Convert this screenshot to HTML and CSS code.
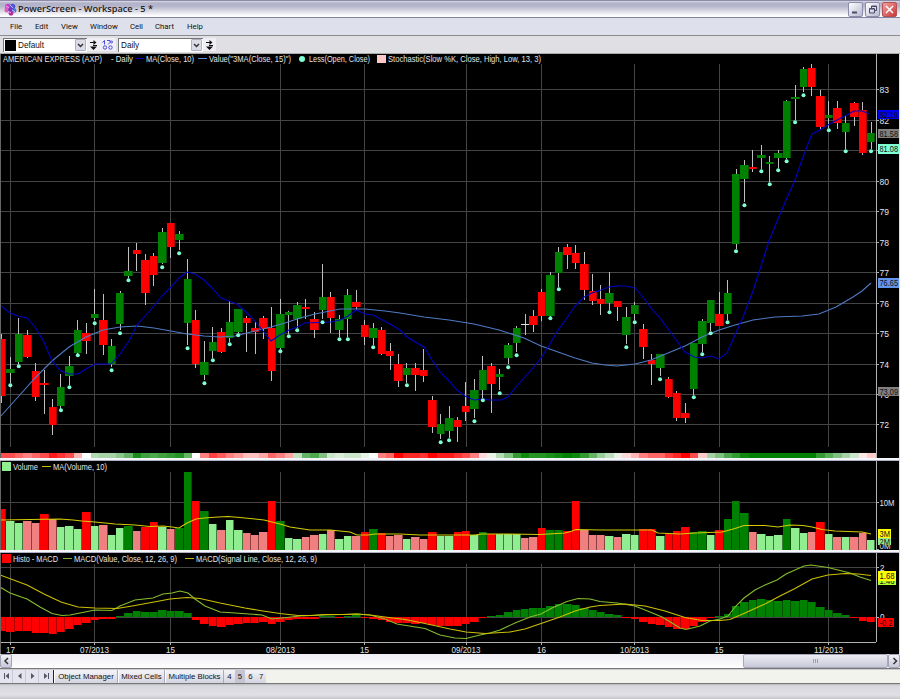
FILE: index.html
```html
<!DOCTYPE html>
<html lang="en">
<head>
    <meta charset="UTF-8">
    <title>PowerScreen - Workspace - 5 *</title>
    <link rel="stylesheet" href="styles.css">
</head>
<body>
<div class="window">
    <div class="titlebar">
        <svg class="logo" width="13" height="13" viewBox="0 0 13 13">
            <circle cx="4" cy="3.5" r="2.8" fill="#c63fd0"/>
            <circle cx="8.5" cy="3.5" r="2.8" fill="#4a55d8"/>
            <circle cx="3" cy="7" r="2.5" fill="#e05cb8"/>
            <circle cx="7" cy="7" r="2.8" fill="#7a35c8"/>
            <circle cx="10.2" cy="7.5" r="2.3" fill="#3f78d8"/>
            <circle cx="7" cy="10.3" r="2.4" fill="#b02ca0"/>
            <path d="M2 3l3 2M6 2l3 3M4 8l3 2M8 7l3 2" stroke="#f4c8f4" stroke-width=".8"/>
        </svg>
        <span class="title">PowerScreen - Workspace - 5 *</span>
        <div class="win-btns">
            <span class="win-btn"><svg width="13" height="13"><path d="M3 9.500h5" stroke="#4a4a68" stroke-width="2"/></svg></span>
            <span class="win-btn"><svg width="13" height="13" fill="none" stroke="#4a4a68"><path d="M5.500 5.500v-2.500h5v4.500h-2"/><path d="M5.500 3.500h5"/><path d="M3.500 5.500h5v4.500h-5zM3.500 6h5"/></svg></span>
            <span class="win-btn close"><svg width="13" height="13"><path d="M3 3l7 7M10 3l-7 7" stroke="#fff" stroke-width="1.500"/></svg></span>
        </div>
    </div>
    <div class="menubar">
        <span class="m1">File</span><span class="m2">Edit</span><span class="m3">View</span><span class="m4">Window</span><span class="m5">Cell</span><span class="m6">Chart</span><span class="m7">Help</span>
    </div>
    <div class="toolbar">
        <div class="combo combo-template"><i class="swatch"></i><span>Default</span><b class="drop"><svg width="9" height="9"><path d="M2 3l2.500 2.500L7 3" fill="none" stroke="#333" stroke-width="1.500"/></svg></b></div>
        <b class="tool"><svg width="11" height="12"><path d="M2 3.500h4M5 6.500h4" stroke="#111"/><path d="M5.500 1l3 2.500-3 2.500zM2 7.500h7L5.500 11z" fill="#111"/></svg></b>
        <b class="tool blue"><svg width="14" height="12" fill="none" stroke="#4a4ae0"><path d="M1.500 3.500l2-2v4M6 1.500h3v2l-2 2"/><circle cx="10.500" cy="3" r="1"/><circle cx="4" cy="8.500" r="1.700"/><circle cx="9.500" cy="8.500" r="1.700"/></svg></b>
        <div class="combo combo-period"><span>Daily</span><b class="drop"><svg width="9" height="9"><path d="M2 3l2.500 2.500L7 3" fill="none" stroke="#333" stroke-width="1.500"/></svg></b></div>
        <b class="tool"><svg width="11" height="12"><path d="M2 3.500h4M5 6.500h4" stroke="#111"/><path d="M5.500 1l3 2.500-3 2.500zM2 7.500h7L5.500 11z" fill="#111"/></svg></b>
    </div>
    <div class="charts">
        <svg id="price" class="panel" width="899" height="404" viewBox="0 54 899 404"></svg>
        <div class="divider"></div>
        <svg id="volume" class="panel" width="899" height="89" viewBox="0 461 899 89"></svg>
        <div class="divider"></div>
        <svg id="macd" class="panel" width="899" height="101" viewBox="0 553 899 101"></svg>
    </div>
    <div class="scrollbar">
        <span class="sb-btn"><svg width="12" height="12"><path d="M7 3L4 6l3 3" fill="none" stroke="#333" stroke-width="1.500"/></svg></span>
        <div class="track"><div class="thumb"><i></i></div></div>
        <span class="sb-btn"><svg width="12" height="12"><path d="M4.500 3l3 3-3 3" fill="none" stroke="#333" stroke-width="1.500"/></svg></span>
    </div>
    <div class="tabs">
        <span class="nav"><svg width="13" height="12"><path d="M4.500 3v6" stroke="#556"/><path d="M9 3v6L5.500 6z" fill="#556"/></svg></span>
        <span class="nav"><svg width="13" height="12"><path d="M8.500 3v6L5 6z" fill="#556"/></svg></span>
        <span class="nav"><svg width="13" height="12"><path d="M5 3v6l3.500-3z" fill="#556"/></svg></span>
        <span class="nav nav-last"><svg width="13" height="12"><path d="M9.500 3v6" stroke="#556"/><path d="M5 3v6l3.500-3z" fill="#556"/></svg></span>
        <span class="tab t1">Object Manager</span>
        <span class="tab t2">Mixed Cells</span>
        <span class="tab t3">Multiple Blocks</span>
        <span class="tab num">4</span>
        <span class="tab num active">5</span>
        <span class="tab num">6</span>
        <span class="tab num">7</span>
    </div>
    <div class="status"></div>
</div>
<script src="chart.js"></script>
</body>
</html>
```
FILE: styles.css
```css
body {
    margin: 0;
    background: #dcdce4;
    font-family: "Liberation Sans", Arial, sans-serif;
    font-size: 8.2px;
    color: #111;
}

.window {
    width: 900px;
    height: 699px;
    display: flex;
    flex-direction: column;
    overflow: hidden;
}

.titlebar {
    height: 16px;
    display: flex;
    align-items: center;
    padding: 0 3px 0 4px;
    border-top: 1px solid #8c8ca8;
    border-bottom: 1px solid #8484a0;
    background: linear-gradient(#dcdce8 0, #b2b2c8 2px, #b4b4ca 5px, #f0f0f6 13px, #fff 15px);
}

.title {
    margin-left: 1px;
    font-family: "Open Sans", "Noto Sans", sans-serif;
    font-weight: 600;
    font-size: 9.2px;
    line-height: 16px;
    color: #222;
    white-space: nowrap;
}

.win-btns {
    display: flex;
    gap: 2px;
    margin-left: auto;
}

.win-btn {
    width: 13px;
    height: 13px;
    border: 1px solid #8c8cac;
    border-radius: 2px;
    background: linear-gradient(135deg, #fff, #b8b8d0);
}

.win-btn svg {
    display: block;
}

.win-btn.close {
    border-color: #b05050;
    background: linear-gradient(135deg, #f0a0a0, #cc3838);
}

.menubar {
    height: 17px;
    display: flex;
    align-items: center;
    padding-left: 10px;
    background: #dee1ec;
    border-bottom: 1px solid #8c8c90;
    font-family: Roboto, sans-serif;
    font-size: 7.8px;
}

.m1 { width: 25px; }
.m2 { width: 26px; }
.m3 { width: 29px; }
.m4 { width: 40px; }
.m5 { width: 25px; }
.m6 { width: 32px; }

.toolbar {
    height: 17px;
    display: flex;
    align-items: center;
    padding-left: 3px;
    background: #e0dfe3;
    border-bottom: 1px solid #aaa;
}

.combo {
    height: 14px;
    display: flex;
    align-items: center;
    background: #fff;
    border-top: 1px solid #777;
    border-left: 1px solid #777;
    box-sizing: border-box;
}

.combo-template {
    width: 84px;
    padding-right: 1px;
}

.combo-period {
    width: 85px;
    padding-left: 2px;
    padding-right: 1px;
}

.swatch {
    width: 11px;
    height: 11px;
    margin: 0 2px 0 1px;
    background: #000;
}

.drop {
    display: flex;
    width: 11px;
    height: 12px;
    margin-left: auto;
    align-items: center;
    justify-content: center;
    border: 1px solid #b0b0c4;
    border-radius: 1px;
    box-sizing: border-box;
    background: #dcdce8;
}

.tool {
    display: flex;
    align-items: center;
    width: 13px;
    height: 13px;
    background: #eeeef4;
    justify-content: center;
}

.tool.blue {
    width: 16px;
    margin-right: 2px;
}

.charts {
    height: 600px;
    width: 899px;
    display: flex;
    flex-direction: column;
    background: #000;
}

.panel {
    display: block;
    background: #000;
}

.panel text {
    font-family: "Liberation Sans", Arial, sans-serif;
    font-size: 8.8px;
    fill: #e4e4e4;
}

.panel .tag-text {
    fill: #111;
}

.panel .mid {
    text-anchor: middle;
}

.grid {
    stroke: #444;
    stroke-width: 1;
}

.axis {
    stroke: #b0b0b0;
    stroke-width: 1;
}

.line {
    fill: none;
    stroke-width: 1.1;
}

.divider {
    height: 3px;
    box-sizing: border-box;
    background: #f4f4fb;
    border-bottom: 1px solid #aeb0c4;
}

.scrollbar {
    height: 14px;
    display: flex;
    border-bottom: 1px solid #77777c;
    background: #f6f6fa;
}

.sb-btn {
    display: flex;
    align-items: center;
    justify-content: center;
    width: 12px;
    box-sizing: border-box;
    border: 1px solid #a4a4b8;
    border-radius: 2px;
    background: linear-gradient(#f2f2f8, #c8c8da);
}

.track {
    flex: 1;
    display: flex;
    justify-content: flex-end;
    background: linear-gradient(#ededf3, #fff);
}

.thumb {
    width: 145px;
    display: flex;
    align-items: center;
    justify-content: center;
    box-sizing: border-box;
    border: 1px solid #a8a8bc;
    border-radius: 2px;
    background: linear-gradient(#ececf3, #c8c8da);
}

.thumb i {
    width: 5px;
    height: 4px;
    background: repeating-linear-gradient(90deg, #9c9cb0 0, #9c9cb0 1px, #dcdce8 1px, #dcdce8 2px);
}

.tabs {
    height: 13px;
    display: flex;
    align-items: stretch;
    background: #f3f3ee;
    border-bottom: 1px solid #777;
    border-top: 1px solid #ccc;
    line-height: 13px;
    font-size: 7.8px;
}

.nav {
    width: 13px;
    background: #e4e4ee;
    border-right: 1px solid #c8c8d8;
    box-sizing: border-box;
}

.nav-last {
    width: 15px;
    border-right: 1px solid #222;
}

.tab {
    box-sizing: border-box;
    text-align: center;
    white-space: nowrap;
    background: linear-gradient(#f4f4f8, #d4d4e2);
    border-right: 1px solid #aaaabc;
    border-left: 1px solid #fff;
}

.t1 { width: 64px; }
.t2 { width: 47px; }
.t3 { width: 59px; }

.num {
    width: 10.6px;
    border-color: transparent;
}

.num.active {
    background: #c4c4d2;
}

.status {
    flex: 1;
    background: linear-gradient(#b8b8c0 0, #d8d8de 2px, #e0e0e6 11px, #c4c4cc 15px);
}
```
FILE: chart.js
```js
var STEP = 8.438;

function x(i) {
    return 1.9 + STEP * i;
}

// high, body top, body bottom, low, [signal dot]; a dot means an up bar
var bars = [
    [334,339,396,403],[357,369,373,383,385],[318,334,362,364,366],[330,335,357,358],[363,371,397,401],
    [370,383,385,414],[399,407,425,435],[374,387,406,409,410],[356,366,376,385,387],[320,330,353,354,355],
    [323,333,341,354],[289,314,318,320,323],[294,320,345,355],[339,346,364,367,370],[291,293,324,330,333],
    [247,271,276,278,280],[243,250,254,271],[254,260,293,305],[253,256,275,286],[228,232,263,264,267],
    [223,223,247,258],[231,234,240,250,253],[259,279,323,345,348],[310,320,364,368],[341,362,375,380,383],
    [327,342,351,358,360],[328,332,352,353],[301,322,338,342,344],[309,309,332,333,335],[316,318,323,352],
    [322,328,332,354],[316,318,329,339],[307,328,371,381],[299,314,348,349,351],[311,312,315,334,336],
    [302,305,319,328,330],[299,307,309,319],[312,319,330,338],[264,297,310,319,322],[292,297,318,333],
    [315,319,330,337,339],[289,295,319,337,339],[290,302,307,310],[320,325,337,345],[323,328,338,345,347],
    [327,330,354,355],[343,351,356,370],[354,364,381,387],[363,368,375,383,385],[363,368,375,391],
    [349,370,376,382],[396,400,427,433],[414,424,434,439,442],[406,418,431,438,440],[417,420,427,442],
    [382,406,412,421],[379,390,409,418,421],[356,370,390,398,400],[363,366,384,413],[369,374,377,390,393],
    [343,345,358,364,367],[326,328,343,352,355],[314,324,325,335],[310,316,325,332],[289,292,316,321],
    [272,275,316,317,318],[247,252,273,287,289],[244,247,255,269],[245,253,263,269],[252,264,290,300],
    [274,291,301,305],[285,299,304,315],[272,293,303,310,312],[301,301,307,321],[307,317,335,344,347],
    [302,305,314,320,322],[324,329,347,359],[354,360,364,385],[354,354,368,376,379],[377,379,397,398],
    [391,393,418,421],[403,413,418,423],[343,343,389,395,397],[319,321,344,352,354],[300,300,323,331,333],
    [292,314,326,326],[280,293,314,320,322],[169,174,244,249,251],[160,165,179,202,205],[150,167,169,172],
    [145,155,158,169,171],[156,162,164,182,184],[150,153,158,168,170],[100,101,158,159,161],[85,97,99,120,122],
    [67,69,87,92,95],[64,68,87,96],[90,96,127,129],[101,115,118,128,130],[101,108,123,129],
    [116,123,132,149,151],[102,103,117,126],[102,110,153,155],[122,133,142,149,151]
];
var DOJI = 62;

// negative is red, positive is green, strength up to 10
var stoch = [-7,-7,-6,-5,-6,-7,-9,-8,-7,-3,0,3,3.5,3.5,4.5,6,9,7.5,7,7.5,8,8.5,6,0,-5,-7.5,-6.5,-5,-4,-2.5,
    -2.5,-3.5,-6,-5,-3.5,2.5,6,7,5,2,1.5,2,2,1,0,-5,-6,-10,-8.5,-8.5,-8,-10,-9,-9,-8,-7,-5,-1.5,1,3,
    5,8,9.5,8.5,8.5,9,9.5,10,9.5,8,6,4,2.5,1,-1.5,-3,-5,-6,-6,-7.5,-8.5,-10,-7,-2,3.5,5,7,8,9.5,10,
    10,10,10,10,10,10,10,8,6.5,5,3.5,2,-1,-2];

var volColors = {R: '#ff0000', G: '#008000', g: '#90ee90', p: '#f08080'};
var vol = ('R509 g521 g523 p521 p523 R514 p519 g527 g526 g529 R512 g526 p525 g535 g528 G526 p531 R527 R522 g527 ' +
    'p529 G528 G472 R501 G511 g524 p530 g520 g530 p533 p535 p532 R501 G521 g538 g539 p537 p535 g534 p530 ' +
    'g539 g536 p536 R532 G529 R533 p536 p535 g539 p537 p539 R532 g536 g536 R532 R531 g535 G532 R534 g534 ' +
    'g534 g534 p538 p537 R528 G530 G530 R531 R501 p530 p535 p535 g536 p537 g534 g535 R529 R529 g536 R534 ' +
    'R531 R527 G532 G531 g535 R530 G519 G501 G513 p532 g534 g536 g535 G519 g528 g533 p532 R522 g534 p537 ' +
    'g537 p537 p533 g540').split(' ');

var histo = [631,632,631,631,633,633,634,632,629,625,623,620,619,619,616,613,611,612,612,610,611,611,613,620,624,626,
    627,625,624,623,623,622,624,622,620,619,619,619,616,616,618,616,615,618,619,620,622,623,623,624,623,625,
    626,626,626,624,622,618,616,615,612,610,609,608,608,606,604,604,605,608,610,612,614,615,618,619,622,624,
    625,627,629,629,626,622,618,616,614,606,602,600,599,600,601,600,601,600,602,607,610,613,615,618,621,622];

var ma10 = '0,305 10,313 18,316 27,318 35,327 44,342 52,361 61,371 69,374 78,374 86,369 95,364 111,364 120,354 129,341 137,325 146,315 154,306 162,296 171,287 179,278 187,272 195,274 204,280 212,288 221,298 229,301 237,304 246,312 255,321 263,331 271,341 280,335 289,330 297,327 305,323 331,322 340,320 348,316 356,310 365,314 373,315 390,324 400,330 407,337 424,347 432,360 441,373 449,381 457,390 465,396 474,400 483,399 490,400 501,400 508,397 516,387 524,378 533,368 541,358 550,344 558,330 567,318 575,306 584,297 592,293 601,290 609,287 617,286 626,286 635,288 643,297 651,308 660,318 668,329 677,341 685,352 694,357 702,358 711,356 719,359 727,353 735,335 743,317 753,291 761,266 769,241 778,219 786,200 795,180 803,157 812,134 820,130 828,125 837,120 845,116 854,111 862,111 870,114';
var ma3 = '0,417 18,397 36,377 52,361 69,347 86,337 103,330 120,327 137,326 154,328 171,331 187,334 204,336 220,337 235,336 255,331 271,327 285,323 300,318 315,314 330,311 340,309 365,309 385,311 400,313 424,317 449,320 474,324 499,330 524,338 541,346 558,352 575,358 592,363 605,365 617,366 635,364 651,360 668,353 685,346 702,337 719,330 735,325 753,320 775,317 802,316 819,314 836,307 853,297 862,291 871,283';
var volMa = '0,520 60,519 73,520 82,521 95,522 115,524 135,525 150,526.5 163,526 172,527 179,528 187,523 196,519 204,518 218,517 228,516.5 240,517.5 255,519 264,520 280,524 290,527 300,528.5 310,530 330,530 350,532 357,535 368,535 375,534 400,534 420,535 475,535 482,534 505,534 540,534.5 565,533 572,531 576,529.5 600,530 652,530 658,533 680,534 695,533 722,532 735,528.5 744,525.5 765,525.5 778,527 790,525 803,525.5 812,527 822,529.5 835,531 862,532 871,534';
var signal = '0,575 27,585 44,594 61,602 78,607 95,608 117,608.5 135,605.5 154,602 170,599 187,597.5 200,598.5 220,603 245,608 263,611 280,613.5 298,615.5 310,615.5 325,614.5 345,614.5 357,614 370,615 385,617 405,619.5 425,623.5 450,629 466,632 485,633.5 510,632 525,629 541,623.5 560,617 575,611 590,607 600,605.5 625,604 645,606 665,611 685,617.5 702,620.5 720,620.5 730,619.5 745,613 765,604 780,596 795,588.5 812,579 828,575 845,573.5 858,574 871,575.5';
var value = '0,587 10,593 27,599 40,607 52,613.5 62,615.5 70,615 85,612 95,610 112,610.5 120,606 135,600 153,598 163,594 172,593 180,591 188,593 195,599 205,606 220,612 235,613 262,615 272,619 282,618 300,616 325,615 357,614 370,615 385,619 397,624 425,628.5 440,635 455,638 466,638.5 480,635 490,633 500,630 515,623 530,617 541,614 552,608 567,601.5 578,598.5 590,599 600,601.5 617,603 635,606 650,612 662,617 672,623 680,628 686,629.5 700,626 710,621 720,619 728,616 735,607 744,598 755,590 765,585 777,580 786,574 795,570 804,566 811,565 828,567.5 850,573 860,577 871,580.5';

var dates = [[10.5,'17',9],[94.5,'07/2013',29],[170.5,'15',9],[280.5,'08/2013',29],[364.5,'15',9],[466,'09/2013',29],
    [541.5,'16',9],[634.5,'10/2013',29],[719,'15',9],[828.5,'11/2013',29]];

function rect(x, y, w, h, fill) {
    return '<rect x="' + x + '" y="' + y + '" width="' + w + '" height="' + h + '" fill="' + fill + '"/>';
}

function seg(x1, y1, x2, y2, cls) {
    return '<line x1="' + x1 + '" y1="' + y1 + '" x2="' + x2 + '" y2="' + y2 + '" class="' + cls + '" shape-rendering="crispEdges"/>';
}

function dash(x1, y, w, color) {
    return rect(x1, y, w, 1, color);
}

function poly(points, color) {
    return '<polyline class="line" points="' + points + '" stroke="' + color + '"/>';
}

// w fixes the drawn width of the label
function text(x, y, s, w, cls) {
    return '<text x="' + x + '" y="' + y + '" class="' + (cls || '') + '"' +
        (w ? ' textLength="' + w + '" lengthAdjust="spacingAndGlyphs"' : '') + '>' + s + '</text>';
}

function tag(y, w, h, color, s, tw) {
    return rect(878, y, w, h, color) + text(879.5, y + 8, s, tw, 'tag-text');
}

function vgrid(top, bottom) {
    return dates.map(function (d) {
        return seg(Math.floor(d[0]) + .5, top, Math.floor(d[0]) + .5, bottom, 'grid');
    }).join('');
}

// bar column with a darker outline
function column(i, top, bottom, color) {
    var left = Math.round(x(i) - 4);
    var w = Math.round(x(i + 1) - 4) - left;
    if (left < 1) {
        w += left - 1;
        left = 1;
    }
    var edge = {'#ff0000': '#b00000', '#008000': '#005000', '#90ee90': '#3f7a3f', '#f08080': '#8a4040'}[color];
    return rect(left, top, w, bottom - top, edge) +
        rect(left, top, w - 1, bottom - top, color);
}

function drawPrice() {
    var s = vgrid(64, 447), i, b, y;
    for (i = 0; i < 12; i++) {
        y = Math.floor(89.7 + 30.48 * i) + .5;
        s += seg(1, y, 876, y, 'grid');
    }
    for (i = 0; i < bars.length; i++) {
        b = bars[i];
        s += rect(Math.round(x(i) - .5), b[0], 1, b[3] - b[0], '#c0c0c0');
        if (i === DOJI) {
            s += rect(Math.round(x(i)) - 4, b[1], 9, 1, '#e0e0e0');
        } else {
            s += column(i, b[1], b[2], b.length > 4 ? '#008000' : '#ff0000');
        }
    }
    s += poly(ma3, '#4f7ac4') + poly(ma10, '#0000c4');
    for (i = 0; i < bars.length; i++) {
        if (bars[i].length > 4) {
            s += '<circle cx="' + x(i) + '" cy="' + (bars[i][4] + .2) + '" r="2" fill="#7fffd4"/>';
        }
        var v = stoch[i], c = Math.round(255 * (1 - Math.abs(v) / 10));
        s += rect(Math.max(1, Math.round(x(i) - 4)), 453, 9, 5,
            v < 0 ? 'rgb(255,' + c + ',' + c + ')' : 'rgb(' + c + ',' + Math.round(128 + c / 2) + ',' + c + ')');
    }
    s += rect(876, 54, 23, 404, '#000') + seg(876.5, 54, 876.5, 458, 'axis');
    // 81 sits behind its price tag
    for (i = 0; i < 12; i++) {
        y = Math.floor(89.7 + 30.48 * i) + .5;
        s += seg(876, y, 879, y, 'axis');
        if (i !== 2) {
            s += text(879.5, y + 3.5, 83 - i, 9.5);
        }
    }
    s += tag(110, 21, 9, '#0000f0', '82.19', 18.5) + tag(129, 21, 9, '#808080', '81.58', 18.5) +
        tag(144, 21, 10, '#7fffd4', '81.08', 18.5) + tag(278, 21, 10, '#6495ed', '76.65', 18.5) +
        tag(387, 21, 9, '#808080', '73.09', 18.5);
    s += text(3, 62, 'AMERICAN EXPRESS (AXP)', 99) + text(111, 62, '- Daily', 22) +
        dash(135, 58, 9, '#0000c8') + text(146, 62, 'MA(Close, 10)', 48) +
        dash(198, 58, 9, '#5a8ad8') + text(209, 62, 'Value("3MA(Close, 15)")', 82) +
        '<circle cx="302" cy="59" r="3" fill="#7fffd4"/>' + text(309, 62, 'Less(Open, Close)', 61) +
        rect(377, 55, 9, 8, '#ffc8c8') + text(388, 62, 'Stochastic(Slow %K, Close, High, Low, 13, 3)', 153);
    s += rect(0, 54, 1, 404, '#666');
    document.getElementById('price').innerHTML = s;
}

function drawVolume() {
    var s = vgrid(472, 550) + seg(1, 502.5, 876, 502.5, 'grid');
    vol.forEach(function (v, i) {
        s += column(i, +v.slice(1), 550, volColors[v[0]]);
    });
    s += poly(volMa, '#d4cc00');
    s += rect(876, 461, 23, 89, '#000') + seg(876.5, 461, 876.5, 550, 'axis') + seg(876, 502.5, 879, 502.5, 'axis');
    s += text(879.5, 506, '10M', 15) + text(879.5, 549, '0M', 11) + seg(876, 549.5, 879, 549.5, 'axis') +
        tag(537, 13, 8, '#90ee90', '2M', 10.5) + tag(529, 13, 9, '#ffff00', '3M', 10.5);
    s += rect(2, 462, 9, 9, '#90ee90') + text(13, 470, 'Volume', 25) +
        dash(42, 466, 9, '#c8c000') + text(53, 470, 'MA(Volume, 10)', 54);
    s += rect(0, 461, 1, 89, '#666');
    document.getElementById('volume').innerHTML = s;
}

function drawMacd() {
    var s = vgrid(564, 642) + seg(1, 567.5, 876, 567.5, 'grid') + seg(1, 617.5, 876, 617.5, 'grid');
    histo.forEach(function (h, i) {
        s += h > 617 ? column(i, 617, h, '#ff0000') : column(i, h, 617, '#008000');
    });
    s += poly(value, '#86bc2c') + poly(signal, '#ccc000');
    s += rect(876, 553, 23, 89, '#000') + seg(876.5, 553, 876.5, 642, 'axis') + seg(0, 642.5, 876, 642.5, 'axis');
    s += seg(876, 567.5, 879, 567.5, 'axis') + seg(876, 617.5, 879, 617.5, 'axis') +
        text(880, 571, '2', 4.5) + text(880, 620, '0', 4.5) +
        tag(576, 18, 9, '#adff2f', '1.46', 15) + tag(571, 18, 10, '#ffff00', '1.68', 15) +
        tag(618, 16, 9, '#ff0000', '-0.2', 13);
    dates.forEach(function (d) {
        s += seg(Math.floor(d[0]) + .5, 642, Math.floor(d[0]) + .5, 645, 'axis') + text(d[0], 653, d[1], d[2], 'mid');
    });
    s += rect(2, 554, 9, 9, '#ff0000') + text(13, 562, 'Histo - MACD', 45) +
        dash(63, 558, 9, '#7cb028') + text(74, 562, 'MACD(Value, Close, 12, 26, 9)', 103) +
        dash(185, 558, 9, '#c0b400') + text(196, 562, 'MACD(Signal Line, Close, 12, 26, 9)', 121);
    s += rect(0, 553, 1, 101, '#666');
    document.getElementById('macd').innerHTML = s;
}

drawPrice();
drawVolume();
drawMacd();
```
